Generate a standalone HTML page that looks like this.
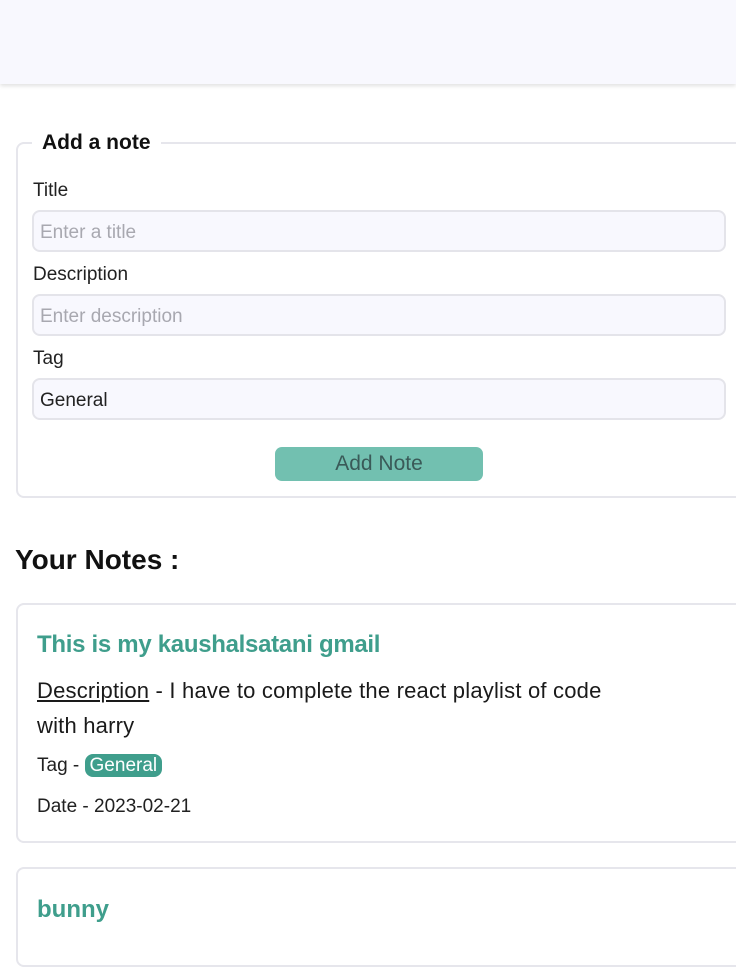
<!DOCTYPE html>
<html><head><style>
body{margin:0;width:736px;height:920px;overflow:hidden;background:#fff;font-family:"Liberation Sans",sans-serif;color:#212121;position:relative}
.nav{position:absolute;left:0;top:0;width:736px;height:84px;background:#f8f8fe;box-shadow:0 2px 4px rgba(0,0,0,.12)}
.box{position:absolute;left:16px;width:740px;border:2px solid #e6e6ec;border-radius:8px;box-sizing:border-box}
.abs{position:absolute;white-space:nowrap}
.inp{position:absolute;left:32px;width:694px;height:42px;border:2px solid #e4e4ea;border-radius:8px;background:#f8f8fe;box-sizing:border-box;font-size:19px;padding:10px 6px;color:#a8a8b0}
.lbl{position:absolute;left:33px;font-size:19px;top:0}
</style></head><body>
<div class="nav"></div>
<div class="box" style="top:142px;height:356px"></div>
<div class="abs" style="left:32px;top:131px;background:#fff;padding:0 10px;font-size:21px;color:#111;font-weight:bold">Add a note</div>
<div class="lbl" style="top:180px">Title</div>
<div class="inp" style="top:210px">Enter a title</div>
<div class="lbl" style="top:264px">Description</div>
<div class="inp" style="top:294px">Enter description</div>
<div class="lbl" style="top:348px">Tag</div>
<div class="inp" style="top:378px;color:#222">General</div>
<div class="abs" style="left:275px;top:447px;width:208px;height:34px;background:#72c0b0;border-radius:7px;text-align:center;line-height:34px;font-size:21px;color:#3a5a58">Add Note</div>
<div class="abs" style="left:15px;top:544px;font-size:28px;color:#111;font-weight:bold">Your Notes :</div>
<div class="box" style="top:603px;height:240px"></div>
<div class="abs" style="left:37px;top:631px;font-size:24px;color:#3f9e8c;font-weight:bold;letter-spacing:-0.3px">This is my kaushalsatani gmail</div>
<div class="abs" style="left:37px;top:673px;font-size:22px;line-height:35px;color:#1a1a1a;letter-spacing:0.2px"><u>Description</u> - I have to complete the react playlist of code<br>with harry</div>
<div class="abs" style="left:37px;top:755px;font-size:19px">Tag - <span style="background:#3f9e8c;color:#fff;border-radius:8px;padding:1px 5px">General</span></div>
<div class="abs" style="left:37px;top:796px;font-size:19px">Date - 2023-02-21</div>
<div class="box" style="top:867px;height:100px"></div>
<div class="abs" style="left:37px;top:896px;font-size:24px;color:#3f9e8c;font-weight:bold">bunny</div>
</body></html>
